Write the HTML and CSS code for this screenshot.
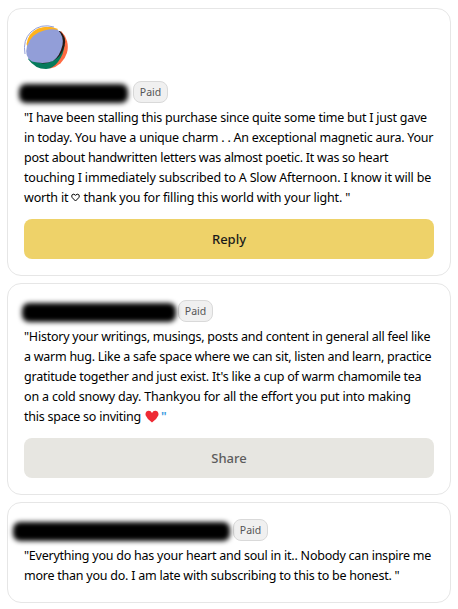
FILE: index.html
```html
<!DOCTYPE html>
<html lang="en">
<head>
    <meta charset="UTF-8">
    <meta name="viewport" content="width=device-width, initial-scale=1.0">
    <title>Subscriber notes</title>
    <link rel="stylesheet" href="styles.css">
</head>
<body>
    <main class="notes">
        <article class="card">
            <svg class="avatar" viewBox="0 0 44 44" aria-hidden="true">
                <path d="M37 6A22 22 0 0 1 26 43.5L20 38z" fill="#ff6b42"/>
                <path d="M4 34Q11 44 22 44Q29 43.500 34 37Q40 29 40.500 20L30 10z" fill="#067a5c"/>
                <path d="M36 6Q43 12 40.500 21Q36 37 19 38.500L12 37L30 6z" fill="#231a16"/>
                <path d="M2.500 19Q4 8 14 3.500Q24 0 34 4L28 12L4 24z" fill="#ffb21c"/>
                <path d="M3 21Q8 8 20 5.500Q28 3.500 34 5Q40 11 38.500 20Q36 31 29 36Q20 39.500 8 36.500Q0 32 3 21z" fill="#929ed8"/>
                <path d="M1 29Q-1.500 15 7 7Q17-2 30 2" fill="none" stroke="#929ed8" stroke-width="1"/>
            </svg>
            <header class="card-head">
                <span class="redacted redacted-short"></span>
                <span class="badge">Paid</span>
            </header>
            <p class="quote">
                <span>"I have been stalling this purchase since quite some time but I just gave</span>
                <span>in today. You have a unique charm . . An exceptional magnetic aura. Your</span>
                <span class="tight">post about handwritten letters was almost poetic. It was so heart</span>
                <span class="loose">touching I immediately subscribed to A Slow Afternoon. I know it will be</span>
                <span class="loose">worth it <svg class="heart-outline" viewBox="0 0 9 9"><path d="M4.5 8L1.2 4.6Q.2 3 1.2 1.7Q2.8.3 4.5 2.3Q6.2.3 7.8 1.7Q8.8 3 7.8 4.6z"/></svg> thank you for filling this world with your light. "</span>
            </p>
            <button class="btn btn-reply">Reply</button>
        </article>

        <article class="card">
            <header class="card-head">
                <span class="redacted redacted-medium"></span>
                <span class="badge">Paid</span>
            </header>
            <p class="quote">
                <span>"History your writings, musings, posts and content in general all feel like</span>
                <span class="tight">a warm hug. Like a safe space where we can sit, listen and learn, practice</span>
                <span>gratitude together and just exist. It's like a cup of warm chamomile tea</span>
                <span class="loose">on a cold snowy day. Thankyou for all the effort you put into making</span>
                <span>this space so inviting <svg class="heart" viewBox="0 0 14 13"><path d="M7 12.5Q2 9 .7 5.5C-.2 2.3 2 .6 3.8.7Q6 .8 7 3Q8 .8 10.2.7C12 .6 14.2 2.3 13.3 5.5Q12 9 7 12.5z"/></svg><span class="tinted">"</span></span>
            </p>
            <button class="btn btn-share">Share</button>
        </article>

        <article class="card">
            <header class="card-head">
                <span class="redacted redacted-long"></span>
                <span class="badge">Paid</span>
            </header>
            <p class="quote">
                <span>"Everything you do has your heart and soul in it.. Nobody can inspire me</span>
                <span>more than you do. I am late with subscribing to this to be honest. "</span>
            </p>
        </article>
    </main>
</body>
</html>
```
FILE: styles.css
```css
* {
    box-sizing: border-box;
}

body {
    margin: 0;
    background: #fff;
    color: #000;
    font-family: "Noto Sans", "Open Sans", sans-serif;
    font-size: 12.5px;
}

.notes {
    display: flex;
    flex-direction: column;
    gap: 7px;
    padding: 8px 7px 7px;
}

.card {
    padding: 16px;
    border: 1px solid #e6e6e6;
    border-radius: 14px;
    background: #fff;
}

.avatar {
    display: block;
    width: 44px;
    height: 44px;
    margin-bottom: 12px;
}

.card-head {
    display: flex;
    align-items: center;
    height: 22px;
    margin-bottom: 5px;
}

/* hidden subscriber name */
.redacted {
    flex: none;
    height: 19px;
    margin-top: 3px;
    border-radius: 7px;
    background: #000;
    filter: blur(2.5px);
}

.redacted-short {
    width: 109px;
    margin-left: -5px;
    margin-right: 5px;
}

.redacted-medium {
    width: 154px;
    margin-left: -2px;
    margin-right: 2px;
}

.redacted-long {
    width: 217px;
    margin-left: -11px;
    margin-right: 3px;
}

.badge {
    width: 35px;
    height: 22px;
    border: 1px solid #d9d9d9;
    border-radius: 8px;
    background: #f0f0f0;
    color: #555;
    font-size: 10.5px;
    line-height: 20px;
    text-align: center;
}

.quote {
    margin: 0;
    line-height: 20px;
    letter-spacing: -0.235px;
}

.quote > span {
    display: block;
    white-space: nowrap;
}

.quote .tight {
    letter-spacing: -0.26px;
}

.quote .loose {
    letter-spacing: -0.185px;
}

.heart-outline {
    width: 9px;
    height: 9px;
    fill: none;
    stroke: #000;
    stroke-width: 1;
}

.heart {
    width: 14px;
    height: 13px;
    margin: 0 2px 0 1px;
    vertical-align: -2px;
    fill: #ee2b35;
}

.tinted {
    color: #3a9be0;
    font-weight: 600;
}

.btn {
    display: block;
    width: 100%;
    height: 40px;
    margin-top: 11px;
    padding: 0;
    border: none;
    border-radius: 8px;
    font: 500 13px/40px "Noto Sans", "Open Sans", sans-serif;
}

.btn-reply {
    background: #eed269;
    color: #1a1a1a;
}

.btn-share {
    background: #e7e6e1;
    color: #5c5c5c;
}
```
